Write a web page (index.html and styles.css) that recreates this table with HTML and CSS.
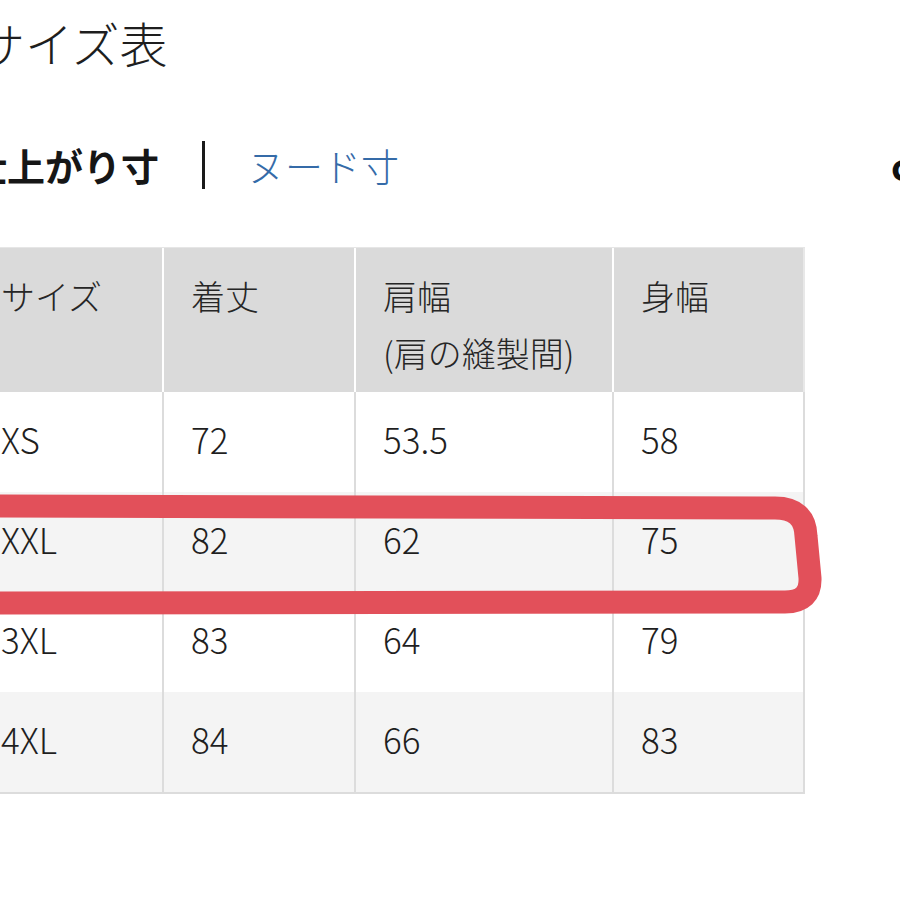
FILE: index.html
```html
<!DOCTYPE html>
<html lang="ja">
<head>
<meta charset="utf-8">
<link rel="stylesheet" href="styles.css">
</head>
<body>
<div class="page">
  <h1 class="title">サイズ表</h1>
  <div class="tabs">
    <span class="tab tab-active">仕上がり寸</span>
    <span class="sep"></span>
    <span class="tab tab-link">ヌード寸</span>
    <span class="unit">cm</span>
  </div>
  <div class="table">
    <div class="row head">
      <div class="cell c1">サイズ</div>
      <div class="cell c2">着丈</div>
      <div class="cell c3">肩幅<br>(肩の縫製間)</div>
      <div class="cell c4">身幅</div>
    </div>
    <div class="row">
      <div class="cell c1">XS</div>
      <div class="cell c2">72</div>
      <div class="cell c3">53.5</div>
      <div class="cell c4">58</div>
    </div>
    <div class="row alt">
      <div class="cell c1">XXL</div>
      <div class="cell c2">82</div>
      <div class="cell c3">62</div>
      <div class="cell c4">75</div>
    </div>
    <div class="row">
      <div class="cell c1">3XL</div>
      <div class="cell c2">83</div>
      <div class="cell c3">64</div>
      <div class="cell c4">79</div>
    </div>
    <div class="row alt">
      <div class="cell c1">4XL</div>
      <div class="cell c2">84</div>
      <div class="cell c3">66</div>
      <div class="cell c4">83</div>
    </div>
  </div>
  <svg class="mark" width="900" height="900" viewBox="0 0 900 900" aria-hidden="true">
    <path d="M -20 488 L 775 490 Q 805 490 806 518 L 810 560 Q 811 584 785 584 L -20 585" fill="none" stroke="#e2505a" stroke-width="23" stroke-linecap="round" stroke-linejoin="round"/>
  </svg>
</div>
</body>
</html>
```

FILE: styles.css
```css
html, body {
  margin: 0;
  padding: 0;
  background: #ffffff;
  overflow: hidden;
}
body {
  width: 900px;
  height: 900px;
  font-family: "Noto Sans CJK JP", "Noto Sans", sans-serif;
  color: #222;
}
.page {
  position: relative;
  width: 900px;
  height: 900px;
}
.title {
  margin: 18px 0 0 -23px;
  font-size: 48px;
  line-height: 48px;
  font-weight: 300;
  color: #1e1e1e;
  white-space: nowrap;
}
.tabs {
  display: flex;
  align-items: center;
  height: 48px;
  margin: 75px 0 0 -31px;
  white-space: nowrap;
}
.tabs > * {
  flex-shrink: 0;
}
.tab {
  font-size: 38px;
  line-height: 48px;
}
.tab-active {
  font-weight: 700;
  color: #161616;
}
.sep {
  display: block;
  width: 3px;
  height: 48px;
  background: #1a1a1a;
  margin: 0 42px 0 43px;
}
.tab-link {
  font-weight: 300;
  color: #356ba8;
}
.unit {
  margin-left: 492px;
  font-size: 38px;
  line-height: 48px;
  font-weight: 700;
  color: #111;
}
.table {
  margin: 58px 0 0 -26px;
  width: 831px;
  border-top: 1px solid #e6e6e6;
  border-bottom: 2px solid #dcdcdc;
}
.row {
  display: flex;
  height: 100px;
  background: #ffffff;
}
.row.alt {
  background: #f4f4f4;
}
.row.head {
  height: 144px;
  background: #dadada;
}
.cell {
  flex-shrink: 0;
  box-sizing: border-box;
  height: 100%;
  padding: 0 0 6px 27px;
  font-size: 35px;
  line-height: 56px;
  font-weight: 300;
  display: flex;
  align-items: center;
  color: #1f1f1f;
  border-right: 2px solid #dcdcdc;
}
.head .cell {
  display: block;
  padding: 19px 0 0 27px;
  font-size: 34px;
  line-height: 57px;
  color: #262626;
  border-right: 2px solid #ffffff;
}
.head .cell.c4 {
  border-right: 2px solid #e8e8e8;
}
.c1 { width: 190px; }
.c2 { width: 192px; }
.c3 { width: 258px; }
.c4 { width: 191px; }
.mark {
  position: absolute;
  left: 0;
  top: 0;
  pointer-events: none;
}
```
